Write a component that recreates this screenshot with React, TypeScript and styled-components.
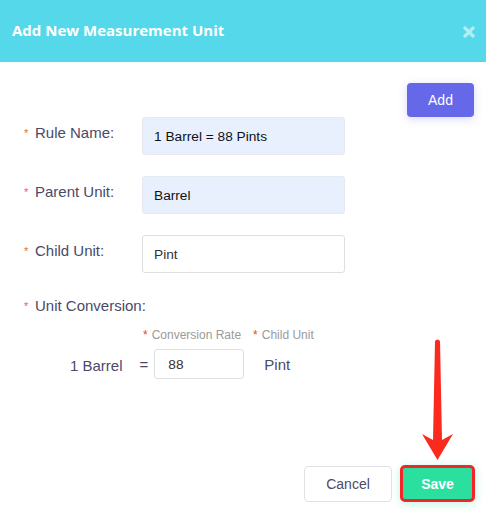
import styled, { createGlobalStyle } from 'styled-components'

const GlobalStyle = createGlobalStyle`
  html, body {
    margin: 0;
    padding: 0;
    background: #fff;
  }
  * {
    box-sizing: border-box;
  }
`

const FONT = `"Liberation Sans", Arial, sans-serif`

const CloseIcon = () => (
  <svg width="12" height="12" viewBox="0 0 12 12">
    <path d="M2 2 L10 10 M10 2 L2 10" stroke="#fff" strokeWidth="3.2" strokeLinecap="round" />
  </svg>
)

const Arrow = () => (
  <ArrowSvg width="40" height="128" viewBox="0 0 40 128">
    <path d="M17 5 Q19.5 2 22 5 L24 104 L35 98 L19.5 124 L4 98 L15 104 Z" fill="#fb2a1e" />
  </ArrowSvg>
)

const fields = [
  { label: 'Rule Name', value: '1 Barrel = 88 Pints', filled: true },
  { label: 'Parent Unit', value: 'Barrel', filled: true },
  { label: 'Child Unit', value: 'Pint', filled: false },
]

const App = () => {
  return (
    <Modal>
      <GlobalStyle />
      <Header>
        <Title>Add New Measurement Unit</Title>
        <CloseButton>
          <CloseIcon />
        </CloseButton>
      </Header>
      <Body>
        <TopBar>
          <AddButton>Add</AddButton>
        </TopBar>
        <Form>
          {fields.map((field) => (
            <Row key={field.label}>
              <Label>
                <Star>*</Star>
                {field.label}:
              </Label>
              <Input $filled={field.filled} readOnly value={field.value} />
            </Row>
          ))}
          <ConversionBlock>
            <Label $wide>
              <Star>*</Star>
              Unit Conversion:
            </Label>
            <SubLabels>
              <SubLabel>
                <SubStar>*</SubStar>Conversion Rate
              </SubLabel>
              <SubLabel>
                <SubStar>*</SubStar>Child Unit
              </SubLabel>
            </SubLabels>
            <ConversionRow>
              <UnitText>1 Barrel</UnitText>
              <Equals>=</Equals>
              <RateInput readOnly value="88" />
              <ChildText>Pint</ChildText>
            </ConversionRow>
          </ConversionBlock>
        </Form>
      </Body>
      <Footer>
        <CancelButton>Cancel</CancelButton>
        <SaveButton>Save</SaveButton>
      </Footer>
      <Arrow />
    </Modal>
  )
}

const Modal = styled.div`
  position: relative;
  width: 486px;
  height: 519px;
  display: flex;
  flex-direction: column;
  background: #fff;
  font-family: ${FONT};
  overflow: hidden;
`
const Header = styled.div`
  height: 62px;
  flex-shrink: 0;
  display: flex;
  align-items: center;
  justify-content: space-between;
  padding: 0 11px 3px 12px;
  background: #55d8ea;
`
const Title = styled.h1`
  margin: 0;
  font-family: "Open Sans", "Noto Sans", sans-serif;
  font-size: 15px;
  font-weight: 700;
  color: #fff;
`
const CloseButton = styled.div`
  display: flex;
  margin-top: 5px;
  opacity: 0.55;
`
const Body = styled.div`
  flex: 1;
  padding: 21px 12px 0 24px;
`
const TopBar = styled.div`
  display: flex;
  justify-content: flex-end;
`
const AddButton = styled.button`
  width: 67px;
  height: 34px;
  border: none;
  border-radius: 4px;
  background: #6468e9;
  color: #fff;
  font-family: ${FONT};
  font-size: 14px;
  box-shadow: 0 2px 8px rgba(100, 104, 233, 0.25);
`
const Form = styled.div`
  display: flex;
  flex-direction: column;
  gap: 21px;
`
const Row = styled.div`
  display: flex;
  align-items: flex-start;
`
const Label = styled.div<{ $wide?: boolean }>`
  width: ${(p) => (p.$wide ? 'auto' : '118px')};
  flex-shrink: 0;
  padding-top: 6px;
  line-height: 20px;
  font-size: 15px;
  color: #4a4a68;
  white-space: nowrap;
`
const Star = styled.span`
  display: inline-block;
  width: 11px;
  color: #f0623f;
  font-size: 11px;
  vertical-align: 1px;
`
const Input = styled.input<{ $filled: boolean }>`
  width: 203px;
  height: 38px;
  padding: 0 11px;
  border: 1px solid ${(p) => (p.$filled ? '#e6e9ef' : '#dcdfe3')};
  border-radius: 3px;
  background: ${(p) => (p.$filled ? '#e8f0fe' : '#fff')};
  font-family: ${FONT};
  font-size: 13.7px;
  color: ${(p) => (p.$filled ? '#111' : '#333')};
  outline: none;
`
const ConversionBlock = styled.div`
  margin-top: -4px;
  display: flex;
  flex-direction: column;
`
const SubLabels = styled.div`
  display: flex;
  gap: 12px;
  margin: 11px 0 0 119px;
  font-size: 12px;
  line-height: 16px;
  color: #9a9a9a;
`
const SubLabel = styled.span``
const SubStar = styled.span`
  color: #f04134;
  margin-right: 4px;
`
const ConversionRow = styled.div`
  display: flex;
  align-items: center;
  margin: 6px 0 0 46px;
  font-size: 15px;
  color: #4a4a68;
`
const UnitText = styled.span`
  margin-top: 3px;
`
const Equals = styled.span`
  margin: 0 6px 0 17px;
`
const RateInput = styled.input`
  width: 90px;
  height: 30px;
  padding: 0 13px;
  border: 1px solid #dcdfe3;
  border-radius: 3px;
  font-family: ${FONT};
  font-size: 13.7px;
  color: #333;
  outline: none;
`
const ChildText = styled.span`
  margin-left: 20px;
`
const Footer = styled.div`
  display: flex;
  justify-content: flex-end;
  align-items: center;
  gap: 8px;
  padding: 0 11px 17px 0;
`
const CancelButton = styled.button`
  width: 88px;
  height: 36px;
  border: 1px solid #e2e2e6;
  border-radius: 4px;
  background: #fff;
  font-family: ${FONT};
  font-size: 14px;
  color: #4a4a68;
`
const SaveButton = styled.button`
  width: 75px;
  height: 37px;
  border: 3px solid #f0262a;
  border-radius: 5px;
  background: #2bdf9f;
  font-family: ${FONT};
  font-size: 14px;
  font-weight: 700;
  color: #fff;
  box-shadow: 0 2px 10px rgba(43, 223, 159, 0.3);
`
const ArrowSvg = styled.svg`
  position: absolute;
  left: 418px;
  top: 336px;
`

export default App
